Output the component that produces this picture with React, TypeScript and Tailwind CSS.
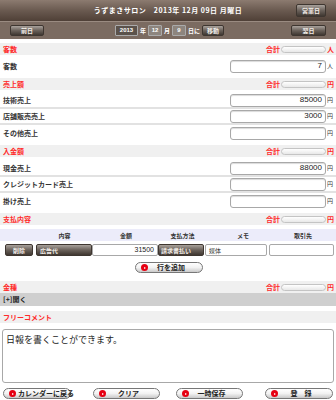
import React from 'react';

const jp = { fontFamily: '"Noto Sans CJK JP", "Noto Sans", sans-serif' };
const num = { fontFamily: '"Liberation Sans", Arial, sans-serif' };

function DarkBtn({ label, className = '' }: { label: string; className?: string }) {
  return (
    <div
      className={`flex items-center justify-center whitespace-nowrap rounded-[2px] border border-[#3e3630] bg-gradient-to-b from-[#a9a29c] via-[#6b625b] to-[#3f3731] text-[6px] font-bold text-[#f2ede8] ${className}`}
    >
      {label}
    </div>
  );
}

function PillBtn({ label, className = '', pad = 'pr-[8px]' }: { label: string; className?: string; pad?: string }) {
  return (
    <div
      className={`relative flex h-[11px] items-center rounded-full border border-[#777] bg-gradient-to-b from-white via-[#f2f2f2] to-[#c9c9c9] ${className}`}
    >
      <span className="ml-[5px] flex h-[7px] w-[7px] shrink-0 items-center justify-center rounded-full bg-[#e60012]">
        <span className="ml-[1px] h-0 w-0 border-y-[1.5px] border-l-[2.5px] border-y-transparent border-l-white" />
      </span>
      <span className={`flex-1 whitespace-nowrap text-center text-[7px] font-bold leading-none text-[#222] ${pad}`}>{label}</span>
    </div>
  );
}

function Band({ title, unit }: { title: string; unit?: string }) {
  return (
    <div className="flex h-[12px] items-center justify-between bg-[#f0f0f0] pl-[3px] pr-[2px]">
      <span className="text-[7px] font-bold leading-none text-[#ff2a2a]">{title}</span>
      {unit && (
        <div className="flex items-center gap-[1px]">
          <span className="text-[7px] font-bold leading-none text-[#ff2a2a]">合計</span>
          <span className="h-[7px] w-[45px] rounded-full border border-[#c4c4c4] bg-gradient-to-b from-white to-[#e8e8e8]" />
          <span className="text-[7px] font-bold leading-none text-[#ff2a2a]">{unit}</span>
        </div>
      )}
    </div>
  );
}

function Row({ label, value, unit, line }: { label: string; value: string; unit: string; line?: boolean }) {
  return (
    <div className={`flex h-[16px] items-center justify-between pl-[3px] pr-[2px] ${line ? 'border-b-2 border-[#e2e2e2]' : ''}`}>
      <span className="text-[7px] font-bold leading-none text-[#333]">{label}</span>
      <div className="flex items-center gap-[1px]">
        <div
          className="flex h-[13px] w-[96px] items-center justify-end rounded-[3px] border border-[#a8a8a8] bg-white pr-[3px] text-[8px] text-[#222] shadow-[inset_0_1px_1px_rgba(0,0,0,0.15)]"
          style={num}
        >
          {value}
        </div>
        <span className="w-[7px] text-[6px] leading-none text-[#333]">{unit}</span>
      </div>
    </div>
  );
}

export default function App() {
  return (
    <div className="flex h-[400px] w-[336px] flex-col bg-white" style={jp}>
      {/* header */}
      <div className="relative flex h-[21px] items-center justify-center bg-gradient-to-b from-[#8c7b70] via-[#6a5a50] to-[#4f4037]">
        <span className="text-[7px] font-bold tracking-[0.5px] text-white">うずまきサロン　2013年 12月 09日 月曜日</span>
        <DarkBtn label="営業日" className="absolute right-[10px] top-[4px] h-[13px] w-[30px]" />
      </div>
      <div className="flex h-[18px] items-center justify-between border-t border-[#9a8b81] bg-[#7b6b61] px-[10px]">
        <DarkBtn label="前日" className="h-[11px] w-[34px]" />
        <div className="ml-[71px] flex items-center gap-[2px] text-[6px] font-bold text-white">
          <span className="flex h-[11px] w-[23px] items-center justify-center rounded-[1px] border border-[#aaa] bg-[#5b524b] text-[6px]" style={num}>2013</span>
          <span>年</span>
          <span className="flex h-[11px] w-[14px] items-center justify-center rounded-[1px] border border-[#aaa] bg-[#8d857e] text-[6px]" style={num}>12</span>
          <span>月</span>
          <span className="flex h-[11px] w-[14px] items-center justify-center rounded-[1px] border border-[#aaa] bg-[#8d857e] text-[6px]" style={num}>9</span>
          <span>日に</span>
          <DarkBtn label="移動" className="h-[11px] w-[22px]" />
        </div>
        <div className="flex-1" />
        <DarkBtn label="翌日" className="h-[11px] w-[35px]" />
      </div>

      <div className="h-[4px]" />
      <Band title="客数" unit="人" />
      <div className="h-[3px]" />
      <Row label="客数" value="7" unit="人" />
      <div className="h-[4px]" />

      <Band title="売上額" unit="円" />
      <div className="h-[3px]" />
      <Row label="技術売上" value="85000" unit="円" line />
      <Row label="店舗販売売上" value="3000" unit="円" line />
      <Row label="その他売上" value="" unit="円" />
      <div className="h-[4px]" />

      <Band title="入金額" unit="円" />
      <div className="h-[4px]" />
      <Row label="現金売上" value="88000" unit="円" line />
      <Row label="クレジットカード売上" value="" unit="円" line />
      <Row label="掛け売上" value="" unit="円" />
      <div className="h-[4px]" />

      <Band title="支払内容" unit="円" />
      <div className="h-[4px]" />
      <div className="flex h-[12px] items-center bg-[#ececfa] text-[6px] font-bold text-[#333]">
        <span className="w-[36px]" />
        <span className="w-[57px] text-center">内容</span>
        <span className="w-[66px] text-center">金額</span>
        <span className="w-[47px] text-center">支払方法</span>
        <span className="w-[64px] pl-[10px] text-center">メモ</span>
        <span className="flex-1 text-center">取引先</span>
      </div>
      <div className="mt-[3px] flex h-[12px] items-stretch pl-[5px] pr-[2px]">
        <DarkBtn label="削除" className="w-[28px]" />
        <div className="w-[3px]" />
        <DarkBtn label="広告代" className="w-[56px] !justify-start pl-[3px]" />
        <div className="flex w-[66px] items-center justify-end rounded-[2px] border border-[#a8a8a8] bg-white pr-[3px] text-[7px] text-[#222]" style={num}>31500</div>
        <DarkBtn label="請求書払い" className="w-[46px] !justify-start pl-[2px]" />
        <div className="ml-[1px] flex w-[62px] items-center rounded-[2px] border border-[#a8a8a8] bg-white pl-[3px] text-[6px] text-[#333]">媒体</div>
        <div className="ml-[2px] flex-1 rounded-[2px] border border-[#a8a8a8] bg-white" />
      </div>
      <div className="mt-[6px] flex justify-center pl-[2px]">
        <PillBtn label="行を追加" className="w-[68px]" />
      </div>
      <div className="h-[8px]" />

      <Band title="金種" unit="円" />
      <div className="flex h-[13px] items-center bg-[#cfcfcf] pl-[3px] text-[7px] font-bold text-[#222]">[+]開く</div>
      <div className="h-[5px]" />
      <Band title="フリーコメント" />
      <div className="mx-[2px] mt-[6px] h-[54px] rounded-[3px] border border-[#a8a8a8] bg-white px-[3px] pt-[4px] text-[9px] leading-tight text-[#222]">
        日報を書くことができます。
      </div>
      <div className="mt-[5px] flex items-center justify-between px-[3px]">
        <PillBtn label="カレンダーに戻る" className="w-[68px]" pad="pl-[2px] pr-[2px] text-left" />
        <PillBtn label="クリア" className="ml-[22px] w-[67px]" />
        <PillBtn label="一時保存" className="ml-[16px] w-[67px]" />
        <PillBtn label="登　録" className="ml-[22px] w-[68px]" />
      </div>
    </div>
  );
}
